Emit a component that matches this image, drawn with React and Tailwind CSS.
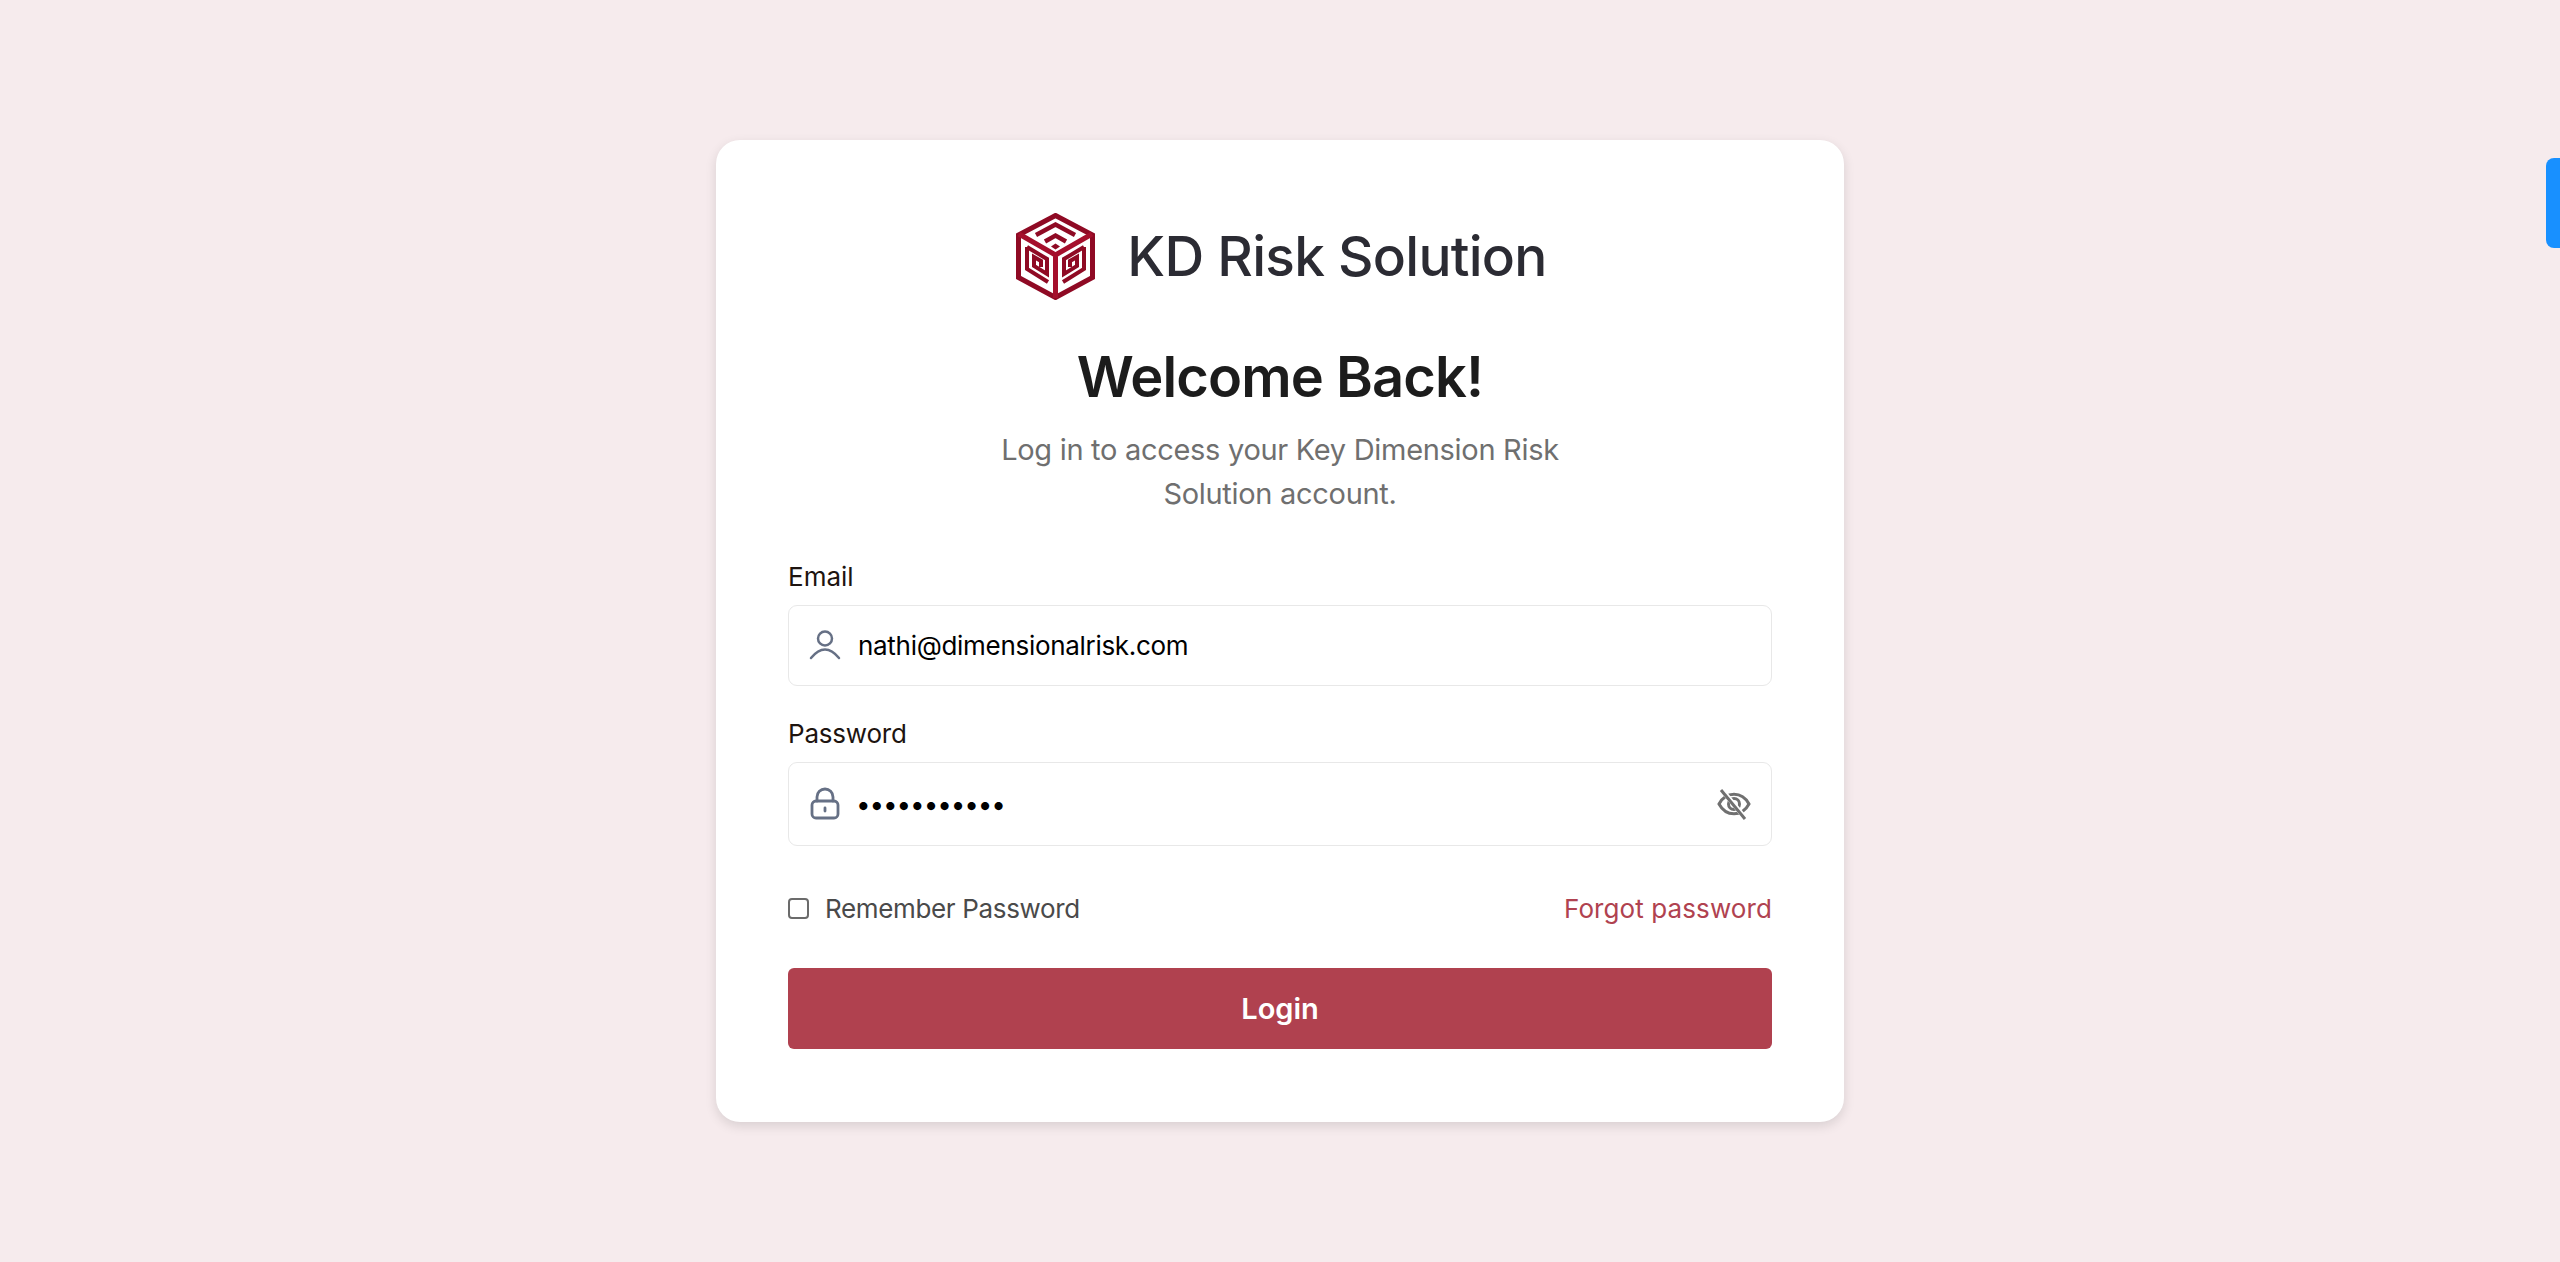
import React from "react";

const Logo = () => (
  <svg viewBox="0 0 79 87" className="w-[79px] h-[87px] shrink-0" fill="none">
    <path d="M39.500 2.500 76.500 22v42.500L39.500 84.500 2.500 64.500V22Z" fill="#fff" stroke="#8f0a24" strokeWidth="5" />
    <path d="M3 21 39.500 42 76 21M39.500 42v43" stroke="#a50f2c" strokeWidth="5" />
    <path d="M20 22 39.500 11.500 59 22" stroke="#8f0a24" strokeWidth="4.500" />
    <path d="M29 28.500 39.500 22.500 50 28.500" stroke="#8f0a24" strokeWidth="4.500" />
    <path d="M39.500 30.500 44 33.500 39.500 36.500 35 33.500Z" fill="#8f0a24" />
    <g stroke="#8f0a24" strokeWidth="4">
      <path d="M11 34V56L32 69" />
      <path d="M11 34 31 46V61L18 53V44L25 48V54" />
      <g transform="translate(79 0) scale(-1 1)">
        <path d="M11 34V56L32 69" />
        <path d="M11 34 31 46V61L18 53V44L25 48V54" />
      </g>
    </g>
  </svg>
);

const UserIcon = () => (
  <svg viewBox="0 0 34 34" className="w-[34px] h-[34px] shrink-0" fill="none" stroke="#667085" strokeWidth="2.500" strokeLinecap="round">
    <circle cx="17" cy="9.500" r="7" />
    <path d="M3 29Q17 12 31 29" />
  </svg>
);

const LockIcon = () => (
  <svg viewBox="0 0 34 34" className="w-[34px] h-[34px] shrink-0" fill="none" stroke="#667085" strokeWidth="2.800" strokeLinecap="round">
    <rect x="4" y="14" width="26" height="17" rx="4" />
    <path d="M9 14V10a8 8 0 0 1 16 0v4" />
    <path d="M17 21v3" />
  </svg>
);

const EyeIcon = () => (
  <svg viewBox="0 0 34 32" className="w-[34px] h-[32px] shrink-0" fill="none" stroke="#707070" strokeWidth="3">
    <path d="M2 16C9 3 25 3 32 16 25 29 9 29 2 16Z" />
    <circle cx="17" cy="16" r="5.500" />
    <path d="M5 2 29 31" stroke="#fff" strokeWidth="5" />
    <path d="M4 2 28 31" />
  </svg>
);

const inputClass = "flex items-center border border-[#e8e8e8] rounded-[9px] bg-white";

export default function App() {
  return (
    <div className="min-h-screen bg-[#f6ebed] flex items-center justify-center font-['Inter',sans-serif] relative overflow-hidden">
      <div className="absolute right-0 top-[158px] w-[14px] h-[90px] bg-[#1890ff] rounded-l-[8px]" />

      <div className="w-[1128px] bg-white rounded-[24px] shadow-[0_4px_12px_rgba(0,0,0,0.12)] px-[72px] pt-[72px] pb-[73px]">
        <div className="flex items-center justify-center gap-[32px] h-[88px] pl-[3px]">
          <Logo />
          <span className="text-[55px] font-medium text-[#2b2b33] tracking-[-0.75px] leading-none">KD Risk Solution</span>
        </div>

        <h1 className="mt-[41px] text-center text-[56px] leading-[72px] font-semibold text-[#1c1c1c] tracking-[-0.9px]">Welcome Back!</h1>

        <p className="mt-[15px] text-center text-[29px] leading-[44px] text-[#6f6f6f] w-[600px] mx-auto tracking-[-0.3px]">
          Log in to access your Key Dimension Risk Solution account.
        </p>

        <label className="block mt-[45px] text-[26px] leading-[32px] text-[#1d1410]">Email</label>
        <div className={`${inputClass} mt-[12px] h-[81px] pl-[19px] pr-[20px]`}>
          <UserIcon />
          <span className="ml-[16px] text-[26px] text-black tracking-[-0.3px]">nathi@dimensionalrisk.com</span>
        </div>

        <label className="block mt-[32px] text-[26px] leading-[32px] text-[#1d1410] tracking-[-0.2px]">Password</label>
        <div className={`${inputClass} mt-[12px] h-[84px] pl-[19px] pr-[20px] justify-between`}>
          <div className="flex items-center">
            <LockIcon />
            <span className="ml-[14px] text-[26px] text-black tracking-[-1.1px]">•••••••••••</span>
          </div>
          <EyeIcon />
        </div>

        <div className="flex items-center justify-between mt-[46px] h-[32px]">
          <div className="flex items-center">
            <span className="w-[21px] h-[21px] border-2 border-[#6b6b6b] rounded-[4px] bg-white" />
            <span className="ml-[16px] text-[26px] text-[#4a4a4a] tracking-[-0.35px]">Remember Password</span>
          </div>
          <span className="text-[26px] text-[#b04250] tracking-[0.1px]">Forgot password</span>
        </div>

        <button className="block w-full h-[81px] mt-[44px] bg-[#b0414f] rounded-[6px] text-white text-[29px] font-semibold">Login</button>
      </div>
    </div>
  );
}
